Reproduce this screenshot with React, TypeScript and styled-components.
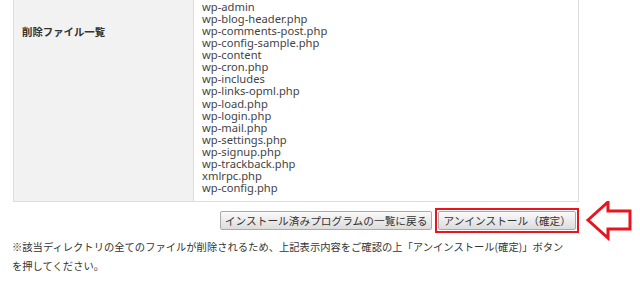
import { FC } from "react";
import styled, { createGlobalStyle } from "styled-components";

const GlobalStyle = createGlobalStyle`
    body {
        margin: 0;
        background: #fff;
        color: #333;
        font-family: "Noto Sans", "Noto Sans CJK JP", sans-serif;
    }
`;

const Page = styled.div`
    width: 640px;
    height: 282px;
    overflow: hidden;
    padding-left: 13px;
    box-sizing: border-box;
`;

const Table = styled.table`
    width: 566px;
    border-collapse: collapse;
    border: 1px solid #ddd;
    border-top: none;
`;

const LabelCell = styled.th`
    width: 180px;
    box-sizing: border-box;
    background: #f2f2f2;
    border-right: 1px solid #ddd;
    padding: 25px 8px 0;
    vertical-align: top;
    text-align: left;
    font-family: "Noto Sans CJK JP", sans-serif;
    font-size: 10.4px;
    font-weight: bold;
    color: #333;
    line-height: 14px;
`;

const ValueCell = styled.td`
    padding: 1px 8px 7px;
    vertical-align: top;
`;

const FileLine = styled.div`
    font-family: "Noto Sans", sans-serif;
    font-size: 11.2px;
    line-height: 12.07px;
    color: #444;
`;

const ButtonRow = styled.div`
    position: relative;
    width: 566px;
    display: flex;
    justify-content: flex-end;
    align-items: center;
    gap: 3px;
    margin-top: 6px;
`;

const Button = styled.button`
    height: 19px;
    padding: 0 4px;
    box-sizing: border-box;
    border: 1px solid #aaa;
    border-radius: 2px;
    background: linear-gradient(#fafafa, #dcdcdc);
    font-family: "Noto Sans CJK JP", sans-serif;
    font-size: 10.7px;
    color: #333;
    line-height: 17px;
    white-space: nowrap;
`;

const Highlight = styled.div`
    border: 2px solid #e8141e;
    padding: 1px;
    display: flex;
`;

const Arrow = styled.svg`
    position: absolute;
    left: 559px;
    top: -7px;
`;

const Note = styled.p`
    margin: 4px 0 0 -1px;
    width: 555px;
    font-family: "Noto Sans CJK JP", sans-serif;
    font-size: 10.3px;
    line-height: 19px;
    color: #333;
`;

const files = [
    "wp-admin",
    "wp-blog-header.php",
    "wp-comments-post.php",
    "wp-config-sample.php",
    "wp-content",
    "wp-cron.php",
    "wp-includes",
    "wp-links-opml.php",
    "wp-load.php",
    "wp-login.php",
    "wp-mail.php",
    "wp-settings.php",
    "wp-signup.php",
    "wp-trackback.php",
    "xmlrpc.php",
    "wp-config.php",
];

const App: FC = () => {
    return (
        <Page>
            <GlobalStyle />
            <Table>
                <tbody>
                    <tr>
                        <LabelCell>削除ファイル一覧</LabelCell>
                        <ValueCell>
                            {files.map(f => (
                                <FileLine key={f}>{f}</FileLine>
                            ))}
                        </ValueCell>
                    </tr>
                </tbody>
            </Table>
            <ButtonRow>
                <Button type='button'>インストール済みプログラムの一覧に戻る</Button>
                <Highlight>
                    <Button type='button'>アンインストール（確定）</Button>
                </Highlight>
                <Arrow width='62' height='40' viewBox='0 0 62 40'>
                    <path
                        d='M16 19 L36 1 L36 10 L58 10 L58 28 L36 28 L36 37 Z'
                        fill='#fff'
                        stroke='#e8141e'
                        strokeWidth='3'
                    />
                </Arrow>
            </ButtonRow>
            <Note>
                ※該当ディレクトリの全てのファイルが削除されるため、上記表示内容をご確認の上「アンインストール(確定)」ボタンを押してください。
            </Note>
        </Page>
    );
};

export default App;
